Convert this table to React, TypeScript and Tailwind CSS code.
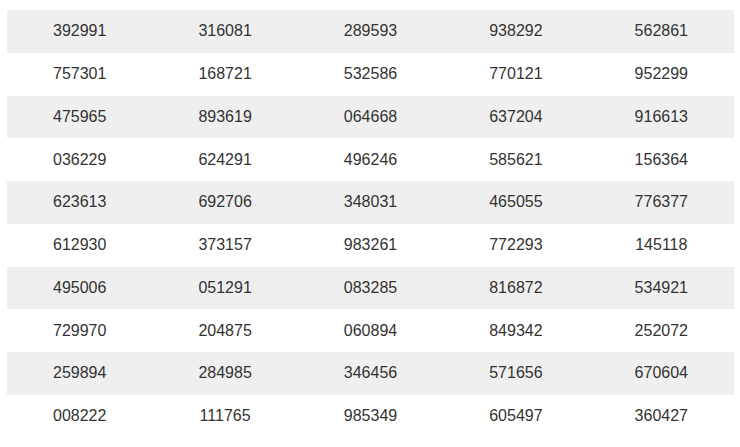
const rows = [
  ['392991', '316081', '289593', '938292', '562861'],
  ['757301', '168721', '532586', '770121', '952299'],
  ['475965', '893619', '064668', '637204', '916613'],
  ['036229', '624291', '496246', '585621', '156364'],
  ['623613', '692706', '348031', '465055', '776377'],
  ['612930', '373157', '983261', '772293', '145118'],
  ['495006', '051291', '083285', '816872', '534921'],
  ['729970', '204875', '060894', '849342', '252072'],
  ['259894', '284985', '346456', '571656', '670604'],
  ['008222', '111765', '985349', '605497', '360427'],
];

export default function App() {
  return (
    <div className="w-[740px] h-[447px] bg-white pt-[10px] pl-[7px] font-['Liberation_Sans',Arial,sans-serif] text-[16px] text-[#333333]">
      <div className="w-[727px] flex flex-col">
        {rows.map((row, i) => (
          <div
            key={i}
            className={`grid grid-cols-5 h-[42.75px] items-center text-center ${i % 2 === 0 ? 'bg-[#efefef]' : 'bg-white'}`}
          >
            {row.map((cell, j) => (
              <div key={j}>{cell}</div>
            ))}
          </div>
        ))}
      </div>
    </div>
  );
}
